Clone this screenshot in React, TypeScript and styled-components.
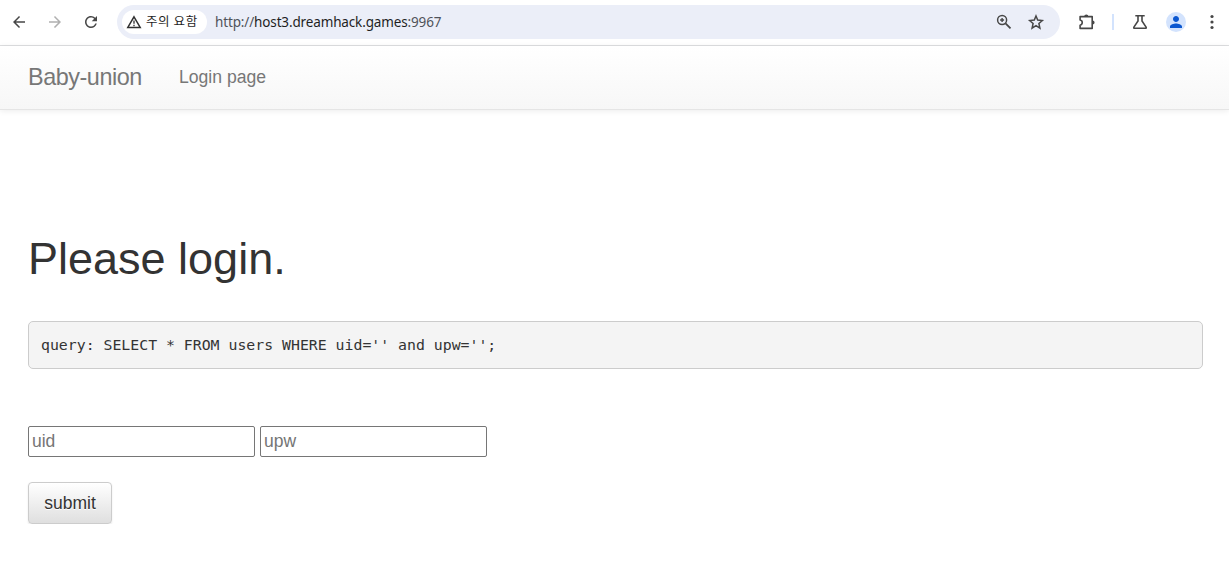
import React from "react";
import styled, { createGlobalStyle } from "styled-components";
import { MdArrowBack, MdArrowForward, MdRefresh, MdPerson } from "react-icons/md";

const GlobalStyle = createGlobalStyle`
  * { box-sizing: border-box; }
  body {
    margin: 0;
    background: #fff;
    color: #333;
    font: 17.5px/25px "Liberation Sans", Arial, sans-serif;
  }
`;

const Toolbar = styled.header`
  display: flex;
  align-items: center;
  height: 46px;
  padding: 0 0 2px 10px;
  border-bottom: 1px solid #dedfe1;
  color: #474747;
  font-family: "Noto Sans", "Noto Sans CJK KR", sans-serif;
`;

const IconButton = styled.span<{ $left?: number; $faded?: boolean }>`
  display: flex;
  flex: none;
  margin-left: ${(p) => p.$left ?? 0}px;
  color: ${(p) => (p.$faded ? "#b0b0b0" : "#474747")};
  svg { display: block; }
`;

const AddressBar = styled.div`
  display: flex;
  flex: none;
  align-items: center;
  width: 943px;
  height: 34px;
  margin-left: 17px;
  padding: 0 15px 0 5px;
  border-radius: 17px;
  background: #ebeef8;
`;

const SecurityChip = styled.span`
  display: flex;
  flex: none;
  align-items: center;
  gap: 4px;
  width: 85px;
  height: 24px;
  padding-left: 4px;
  border-radius: 12px;
  background: #fff;
  color: #1f1f1f;
  font: 12.5px/22px "Noto Sans CJK KR", sans-serif;
  white-space: nowrap;
`;

const ChipLabel = styled.span`
  padding-bottom: 2px;
  letter-spacing: 0.6px;
`;

const Url = styled.span`
  flex: 1;
  margin-left: 8px;
  font-size: 13.5px;
  line-height: 20px;
  letter-spacing: -0.14px;
  color: #50535a;
`;

const Host = styled.span`
  color: #1f1f1f;
`;

const Divider = styled.span`
  flex: none;
  width: 2px;
  height: 16px;
  margin-left: 16px;
  background: #d3e3fd;
`;

const Avatar = styled.span`
  display: grid;
  flex: none;
  place-items: center;
  width: 20px;
  height: 20px;
  margin-left: 17px;
  border-radius: 50%;
  background: #d3e3fd;
  color: #0b57d0;
`;

const Navbar = styled.nav`
  display: flex;
  align-items: center;
  height: 64px;
  padding: 0 28px 1px;
  border-bottom: 1px solid #e5e5e5;
  background: linear-gradient(#fff, #f7f7f7);
  box-shadow: 0 1px 6px rgba(0, 0, 0, 0.08);
  color: #777;
`;

const Brand = styled.span`
  width: 151px;
  font-size: 23.4px;
  letter-spacing: -0.45px;
`;

const NavLink = styled.span`
  font-size: 17.6px;
`;

const Page = styled.main`
  padding: 124px 26px 0 28px;
`;

const Title = styled.h1`
  margin: 0;
  font-size: 45px;
  font-weight: 400;
  line-height: 50px;
`;

const Query = styled.pre`
  height: 48px;
  margin: 37px 0 0;
  padding: 10px 12px;
  border: 1px solid #ccc;
  border-radius: 5px;
  background: #f4f4f4;
  font: 14.83px/25px "DejaVu Sans Mono", monospace;
`;

const LoginForm = styled.form`
  margin-top: 57px;
`;

const Fields = styled.div`
  display: flex;
  gap: 5px;
`;

const Field = styled.input`
  width: 227px;
  height: 31px;
  padding: 1px 3px 2px;
  border: 1px solid #767676;
  border-radius: 2px;
  background: #fff;
  font: 17.5px "Liberation Sans", Arial, sans-serif;
  &::placeholder { color: #757575; }
`;

const SubmitButton = styled.button`
  display: block;
  width: 84px;
  height: 42px;
  margin-top: 25px;
  padding: 0;
  border: 1px solid #ccc;
  border-radius: 4px;
  background: linear-gradient(#fff, #dfdfdf);
  box-shadow: 0 1px 2px rgba(0, 0, 0, 0.1);
  color: #333;
  font: 17.5px "Liberation Sans", Arial, sans-serif;
  text-shadow: 0 1px 0 #fff;
`;

const WarningIcon = () => (
  <svg width="16" height="14" viewBox="0 0 16 14" fill="none" stroke="#303030" strokeWidth="1.5">
    <path d="M8 1.8 14.2 12.4H1.8Z" />
    <path d="M8 5.5v3.3M8 9.8v1.4" strokeWidth="1.3" />
  </svg>
);

const ZoomInIcon = () => (
  <svg width="18" height="18" viewBox="0 0 18 18" fill="none" stroke="currentColor">
    <circle cx="7.1" cy="7" r="4.5" strokeWidth="1.5" />
    <path d="M10.5 10.4l5 5" strokeWidth="1.7" />
    <path d="M7.1 5v4M5.1 7h4" strokeWidth="1.4" />
  </svg>
);

const StarIcon = () => (
  <svg width="18" height="18" viewBox="0 0 18 18" fill="none" stroke="currentColor" strokeWidth="1.5">
    <path d="M9 3l1.7 4.1 4.6.4-3.4 3 1 4.6L9 12.7l-3.9 2.4 1-4.6-3.4-3 4.6-.4Z" />
  </svg>
);

const ExtensionIcon = () => (
  <svg width="18" height="18" viewBox="0 0 18 18">
    <path
      d="M2.1 3.6H14.2v11.8H2.1v-3.2a2.65 2.65 0 0 0 0-5.2Z"
      fill="none"
      stroke="currentColor"
      strokeWidth="1.6"
      strokeLinejoin="round"
    />
    <path d="M6.2 3.5a2.1 2.1 0 0 1 4.2 0ZM14.5 7.4a2.1 2.1 0 0 1 0 4.2Z" fill="currentColor" />
  </svg>
);

const FlaskIcon = () => (
  <svg width="18" height="18" viewBox="0 0 18 18" fill="none" stroke="currentColor" strokeWidth="1.6">
    <path d="M4.3 2.8h9.4M7 2.8v5.1l-4.1 6.2c-.3.5-.1 1.1.5 1.1h11.2c.6 0 .8-.6.5-1.1L11 7.9V2.8" />
  </svg>
);

const MenuIcon = () => (
  <svg width="18" height="18" viewBox="0 0 18 18" fill="currentColor">
    <circle cx="9" cy="3.5" r="1.6" />
    <circle cx="9" cy="9" r="1.6" />
    <circle cx="9" cy="14.5" r="1.6" />
  </svg>
);

export default function App() {
  return (
    <>
      <GlobalStyle />
      <Toolbar>
        <IconButton><MdArrowBack size={18} /></IconButton>
        <IconButton $left={18} $faded><MdArrowForward size={18} /></IconButton>
        <IconButton $left={18}><MdRefresh size={18} /></IconButton>
        <AddressBar>
          <SecurityChip>
            <WarningIcon />
            <ChipLabel>주의 요함</ChipLabel>
          </SecurityChip>
          <Url>http://<Host>host3.dreamhack.games</Host>:9967</Url>
          <IconButton><ZoomInIcon /></IconButton>
          <IconButton $left={14}><StarIcon /></IconButton>
        </AddressBar>
        <IconButton $left={18}><ExtensionIcon /></IconButton>
        <Divider />
        <IconButton $left={17}><FlaskIcon /></IconButton>
        <Avatar><MdPerson size={18} /></Avatar>
        <IconButton $left={17}><MenuIcon /></IconButton>
      </Toolbar>
      <Navbar>
        <Brand>Baby-union</Brand>
        <NavLink>Login page</NavLink>
      </Navbar>
      <Page>
        <Title>Please login.</Title>
        <Query>query: SELECT * FROM users WHERE uid='' and upw='';</Query>
        <LoginForm>
          <Fields>
            <Field placeholder="uid" />
            <Field placeholder="upw" />
          </Fields>
          <SubmitButton type="button">submit</SubmitButton>
        </LoginForm>
      </Page>
    </>
  );
}
